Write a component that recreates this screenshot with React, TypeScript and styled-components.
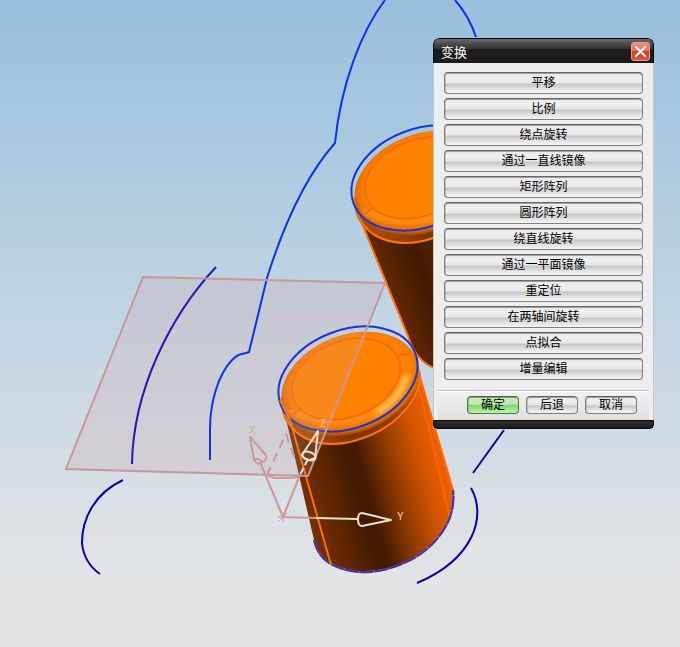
import React from 'react';
import styled, { createGlobalStyle } from 'styled-components';

const GlobalStyle = createGlobalStyle`
  * { box-sizing: border-box; }
  body {
    margin: 0;
    font-family: "Liberation Sans", "Noto Sans CJK SC", sans-serif;
  }
`;

const Viewport = styled.main`
  position: relative;
  min-height: 100vh;
  overflow: hidden;
  background: linear-gradient(#99bfdc 0%, #a8c8df 20%, #bdd3e2 43%, #d2dce4 68%, #e4e5e6 91%, #e6e6e5 100%);
`;

const Scene = styled.svg`
  position: absolute;
  inset: 0;
  width: 100%;
  height: 100%;
`;

const Dialog = styled.section`
  position: absolute;
  top: 38px;
  right: 26px;
  width: 221px;
  overflow: hidden;
  border-radius: 6px 6px 4px 4px;
  background: #eeeeee;
`;

const TitleBar = styled.header`
  display: flex;
  align-items: center;
  justify-content: space-between;
  height: 25px;
  padding: 1px 3px 0 7px;
  border: 1px solid #080808;
  border-width: 1px 1px 0;
  border-radius: 6px 6px 0 0;
  background: linear-gradient(#6c6c6c 0%, #484848 22%, #343434 40%, #1b1b1b 42%, #1b1b1b 100%);
`;

const Title = styled.h1`
  margin: 0;
  padding-top: 2px;
  color: #fff;
  font-size: 13px;
  font-weight: 400;
  line-height: 20px;
`;

const CloseButton = styled.button`
  display: grid;
  place-items: center;
  width: 19px;
  height: 19px;
  padding: 0;
  border: 1px solid #f09a86;
  border-radius: 3px;
  background: linear-gradient(#ee8d79 0%, #e2705a 45%, #cf3c24 50%, #de5438 100%);
`;

const Content = styled.div`
  padding: 9px 4px 0;
  border: 1px solid #c4c4c4;
  border-width: 0 1px;
`;

const ActionList = styled.div`
  display: flex;
  flex-direction: column;
  gap: 4px;
  padding: 0 6px 10px;
`;

const PushButton = styled.button<{ $primary?: boolean }>`
  border: 1px solid ${(p) => (p.$primary ? '#4f7a48' : '#808080')};
  border-top-color: ${(p) => (p.$primary ? '#4a6b45' : '#666')};
  border-radius: 4px;
  padding: 0;
  color: #000;
  font-family: inherit;
  font-size: 12px;
  background: ${(p) =>
    p.$primary
      ? 'linear-gradient(#c9eebf 0%, #bce8b0 45%, #84d272 52%, #a0ec8b 80%, #b8f8a6 100%)'
      : 'linear-gradient(#e8e8e8 0%, #f0f0f0 25%, #e6e6e6 50%, #c6c6c6 56%, #dedede 75%, #f6f6f6 100%)'};
  box-shadow: inset 0 1px 0 ${(p) => (p.$primary ? '#79a070' : '#a0a0a0')}, inset 1px 0 0 rgba(140, 140, 140, 0.4);
`;

const ActionButton = styled(PushButton)`
  height: 22px;
  line-height: 18px;
`;

const Footer = styled.footer`
  display: flex;
  justify-content: flex-end;
  gap: 7px;
  padding: 5px 12px 6px;
  border-top: 1px solid #bdbdbd;
  background: linear-gradient(#f2f2f2, #dfdfdf);
  box-shadow: inset 0 1px 0 #fff;
`;

const FooterButton = styled(PushButton)`
  width: 52px;
  height: 18px;
  line-height: 14px;
`;

const BottomEdge = styled.div`
  height: 9px;
  border: 1px solid #080808;
  border-radius: 0 0 4px 4px;
  background: linear-gradient(#303030, #1a1a1a);
`;

const actions = [
  '平移',
  '比例',
  '绕点旋转',
  '通过一直线镜像',
  '矩形阵列',
  '圆形阵列',
  '绕直线旋转',
  '通过一平面镜像',
  '重定位',
  '在两轴间旋转',
  '点拟合',
  '增量编辑',
];

const PLANE = 'M143 277L385 283L308 476L66 469Z';
const FRONT_BASE = 'M314 540Q318 558 333 565Q357 577 387 569Q428 558 446 526Q455 510 453 490';
const FRONT_BODY =
  'M281 397L314 540Q318 558 333 565Q357 577 387 569Q428 558 446 526Q455 510 453 490L418 370Z';

function CylinderCap() {
  return (
    <g>
      <ellipse cx="351" cy="391" rx="72" ry="49" transform="rotate(-21 351 391)" fill="url(#skirt)" />
      <ellipse cx="350" cy="384" rx="71" ry="49" transform="rotate(-21 350 384)" fill="url(#rim)" />
      <path d="M281 399Q284 427 305 438Q331 450 363 438Q398 426 415 396Q421 384 420 372" fill="none" stroke="#ff7410" strokeWidth="2" />
      <path d="M376 412Q398 402 406 378" fill="none" stroke="#ffbe50" strokeWidth="7" strokeLinecap="round" filter="url(#soft)" />
      <path d="M292 412Q330 431 376 413" fill="none" stroke="#ff8d18" strokeWidth="6" strokeLinecap="round" filter="url(#soft)" />
      <ellipse cx="346" cy="379" rx="56" ry="38" transform="rotate(-21 346 379)" fill="#ff8200" stroke="#f96c05" strokeWidth="2" />
      <path d="M398 356Q403 353 409 355M291 416L299 409" fill="none" stroke="#f46808" strokeWidth="2" />
      <ellipse cx="348" cy="379" rx="72" ry="49" transform="rotate(-21 348 379)" fill="none" stroke="#1834dc" strokeWidth="2" />
    </g>
  );
}

function ModelScene() {
  return (
    <Scene viewBox="0 0 680 647" preserveAspectRatio="xMidYMid slice" aria-hidden="true">
      <defs>
        <linearGradient id="frontBody" gradientUnits="userSpaceOnUse" x1="304" y1="503" x2="448" y2="463">
          <stop offset="0" stopColor="#743100" />
          <stop offset="0.18" stopColor="#602600" />
          <stop offset="0.36" stopColor="#431b00" />
          <stop offset="0.44" stopColor="#451b00" />
          <stop offset="0.62" stopColor="#8c3900" />
          <stop offset="0.82" stopColor="#cf5400" />
          <stop offset="1" stopColor="#f46200" />
        </linearGradient>
        <linearGradient id="backBody" gradientUnits="userSpaceOnUse" x1="375" y1="285" x2="450" y2="257">
          <stop offset="0" stopColor="#6c2c00" />
          <stop offset="0.6" stopColor="#421a00" />
          <stop offset="1" stopColor="#562200" />
        </linearGradient>
        <radialGradient id="rim" cx="0.52" cy="0.46" r="0.54">
          <stop offset="0" stopColor="#ff8400" />
          <stop offset="0.8" stopColor="#fc8003" />
          <stop offset="0.92" stopColor="#e67002" />
          <stop offset="1" stopColor="#a64a00" />
        </radialGradient>
        <linearGradient id="skirt" gradientUnits="userSpaceOnUse" x1="281" y1="420" x2="419" y2="380">
          <stop offset="0" stopColor="#b65200" />
          <stop offset="0.35" stopColor="#7c3400" />
          <stop offset="0.65" stopColor="#944000" />
          <stop offset="1" stopColor="#ee6600" />
        </linearGradient>
        <filter id="soft" x="-30%" y="-30%" width="160%" height="160%">
          <feGaussianBlur stdDeviation="2" />
        </filter>
        <clipPath id="frontShape">
          <path d={FRONT_BODY} />
          <ellipse cx="350" cy="384" rx="71" ry="49" transform="rotate(-21 350 384)" />
        </clipPath>
      </defs>

      <path d={PLANE} fill="#d0b0b6" fillOpacity="0.3" />

      <g fill="none" stroke="#0c34ea" strokeWidth="2">
        <path d="M385 0C361 32 341 84 335 143C304 178 282 230 267 278L249 352C242 355 240 352 233 359C217 375 210 405 210 429V460" />
        <path d="M455 0Q469 16 476 37" />
        <path d="M216 267C170 316 133 391 132 464" stroke="#2418b8" />
        <g stroke="#0804a8">
          <path d="M123 480C95 493 82 518 82 543Q84 563 100 574" />
          <path d="M504 430L473 473" />
          <path d="M471 488C487 516 474 559 417 583" />
        </g>
      </g>

      <path d="M354 204L408 336Q416 361 434 368L500 368V180Z" fill="url(#backBody)" stroke="#ff7010" strokeWidth="2" />
      <g transform="translate(73 -201)">
        <CylinderCap />
      </g>

      <path d={FRONT_BODY} fill="url(#frontBody)" />
      <path d="M418 370L453 490" fill="none" stroke="#ff6c08" strokeWidth="2" />
      <path d="M420 391L450 518" fill="none" stroke="#fa6504" strokeWidth="2" />
      <path d={FRONT_BASE} fill="none" stroke="#e8602c" strokeWidth="2" />
      <path d={FRONT_BASE} fill="none" stroke="#3434c4" strokeWidth="2" strokeDasharray="14 1" />
      <CylinderCap />
      <path d="M280 400L290 420L331 565" fill="none" stroke="#ff6e0a" strokeWidth="2" />

      <path d={PLANE} fill="#d8b0b4" fillOpacity="0.15" clipPath="url(#frontShape)" />
      <path d={PLANE} fill="none" stroke="#c99699" strokeWidth="2" />

      <g fill="none" stroke="#c99a9c" strokeWidth="2" strokeLinejoin="round">
        <path d="M283 517L260 462M283 517L300 475M283 517L316 518" />
        <path d="M278 517H288M283 512V522M279 521L287 513" strokeWidth="1" />
        <path d="M250 437L254 460Q258 466 263 462Q268 459 265 454ZM255 460Q258 457 262 462" />
        <path d="M267 475L286 434L296 462" strokeDasharray="9 6" />
        <path d="M267 475L274 478H291L300 477" />
      </g>
      <g fill="none" stroke="#e8ded2" strokeWidth="2" strokeLinejoin="round">
        <path d="M316 518L358 519M391 520L362 513Q358 513 358 519Q358 526 362 526Z" />
        <path d="M318 431L302 455Q304 460 310 460L315 458Z" />
        <ellipse cx="309" cy="456" rx="7" ry="4" transform="rotate(18 309 456)" />
        <path d="M308 459L300 475" strokeDasharray="7 3" />
      </g>
      <g fontFamily="Liberation Sans, sans-serif" fontSize="10">
        <text x="249" y="434" fill="#c8a4a6">X</text>
        <text x="320" y="427" fill="#eebd92">Z</text>
        <text x="397" y="520" fill="#ecdccb">Y</text>
      </g>
    </Scene>
  );
}

export default function App() {
  return (
    <>
      <GlobalStyle />
      <Viewport>
        <ModelScene />
        <Dialog role="dialog" aria-labelledby="dialog-title">
          <TitleBar>
            <Title id="dialog-title">变换</Title>
            <CloseButton type="button" aria-label="关闭">
              <svg width="13" height="13" viewBox="0 0 13 13" aria-hidden="true">
                <path d="M2 2L11 11M11 2L2 11" stroke="#fff" strokeWidth="2" strokeLinecap="square" />
              </svg>
            </CloseButton>
          </TitleBar>
          <Content>
            <ActionList>
              {actions.map((label) => (
                <ActionButton type="button" key={label}>
                  {label}
                </ActionButton>
              ))}
            </ActionList>
            <Footer>
              <FooterButton type="button" $primary>确定</FooterButton>
              <FooterButton type="button">后退</FooterButton>
              <FooterButton type="button">取消</FooterButton>
            </Footer>
          </Content>
          <BottomEdge />
        </Dialog>
      </Viewport>
    </>
  );
}
